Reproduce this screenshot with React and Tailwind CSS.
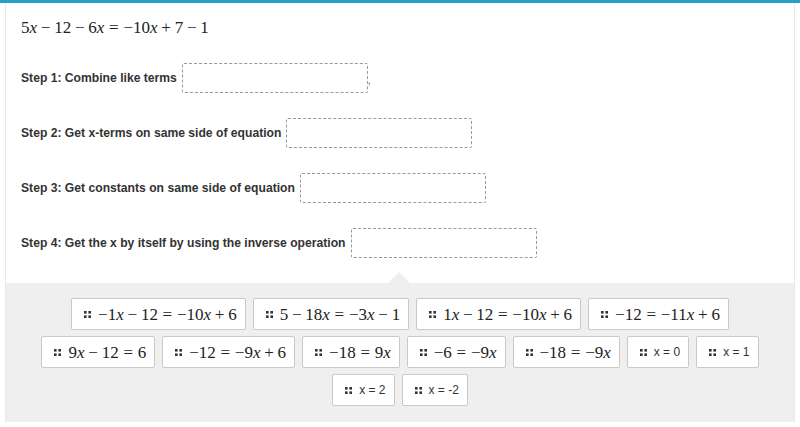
import React from "react";

const serif = { fontFamily: '"Liberation Serif", "DejaVu Serif", serif' };

// tiny tex-like renderer: "-" between terms = binary minus, "=" relation, leading "-" unary
function MathText({ expr, className = "" }) {
  const parts = expr.split(" ");
  return (
    <span className={`whitespace-nowrap text-[17px] leading-none text-[#222] ${className}`} style={serif}>
      {parts.map((p, i) => {
        if (p === "-" || p === "+") {
          return (
            <span key={i} className="mx-[0.222em]">
              {p === "-" ? "\u2212" : "+"}
            </span>
          );
        }
        if (p === "=") {
          return (
            <span key={i} className="mx-[0.278em]">
              =
            </span>
          );
        }
        const chars = p.replace(/^-/, "\u2212").split("");
        return (
          <span key={i}>
            {chars.map((c, j) =>
              c === "x" ? (
                <i key={j} className="italic">
                  x
                </i>
              ) : (
                <span key={j}>{c}</span>
              )
            )}
          </span>
        );
      })}
    </span>
  );
}

function Handle() {
  return (
    <svg width="7" height="7" viewBox="0 0 7 7" className="shrink-0">
      <rect x="0" y="0" width="2.6" height="2.6" fill="#333" />
      <rect x="4.4" y="0" width="2.6" height="2.6" fill="#333" />
      <rect x="0" y="4.4" width="2.6" height="2.6" fill="#333" />
      <rect x="4.4" y="4.4" width="2.6" height="2.6" fill="#333" />
    </svg>
  );
}

function Chip({ expr, plain }) {
  return (
    <div className="flex h-[32px] items-center gap-[7px] rounded-[2px] border border-[#c9c9c9] bg-white pl-[12px] pr-[8px]">
      <Handle />
      {plain ? (
        <span className="text-[12px] text-[#333]" style={{ fontFamily: '"Liberation Sans", Arial, sans-serif' }}>
          {plain}
        </span>
      ) : (
        <MathText expr={expr} />
      )}
    </div>
  );
}

const steps = [
  { label: "Step 1: Combine like terms", comma: true },
  { label: "Step 2: Get x-terms on same side of equation" },
  { label: "Step 3: Get constants on same side of equation" },
  { label: "Step 4: Get the x by itself by using the inverse operation" },
];

const rows = [
  [
    { expr: "-1x - 12 = -10x + 6" },
    { expr: "5 - 18x = -3x - 1" },
    { expr: "1x - 12 = -10x + 6" },
    { expr: "-12 = -11x + 6" },
  ],
  [
    { expr: "9x - 12 = 6" },
    { expr: "-12 = -9x + 6" },
    { expr: "-18 = 9x" },
    { expr: "-6 = -9x" },
    { expr: "-18 = -9x" },
    { plain: "x = 0" },
    { plain: "x = 1" },
  ],
  [{ plain: "x = 2" }, { plain: "x = -2" }],
];

export default function App() {
  return (
    <div className="h-[427px] w-[800px] overflow-hidden bg-white" style={{ fontFamily: '"Liberation Sans", Arial, sans-serif' }}>
      <div className="h-[3px] bg-[#22a0c8]" />
      <div className="mx-[5px] border-x border-[#e8e8e8]">
        <div className="flex flex-col px-[15px] pb-[25px] pt-[14px]">
          <div className="flex h-[20px] items-center">
            <MathText expr="5x - 12 - 6x = -10x + 7 - 1" />
          </div>
          <div className="mt-[26px] flex flex-col gap-[25px]">
            {steps.map((s) => (
              <div key={s.label} className="flex h-[30px] items-center">
                <span className="text-[12.15px] font-bold text-[#333]">{s.label}</span>
                <div className="ml-[5px] h-[30px] w-[186px] rounded-[2px] border border-dashed border-[#999]" />
                {s.comma && <span className="mt-[6px] text-[10px] leading-none text-[#666]">,</span>}
              </div>
            ))}
          </div>
        </div>
        <div className="relative flex flex-col gap-[6px] bg-[#efefef] pb-[16px] pt-[15px]">
          <div className="absolute left-[382px] top-[-11px] h-0 w-0 border-x-[11px] border-b-[11px] border-x-transparent border-b-[#efefef]" />
          {rows.map((r, i) => (
            <div key={i} className="flex justify-center gap-[7px]">
              {r.map((c, j) => (
                <Chip key={j} expr={c.expr} plain={c.plain} />
              ))}
            </div>
          ))}
        </div>
      </div>
    </div>
  );
}
